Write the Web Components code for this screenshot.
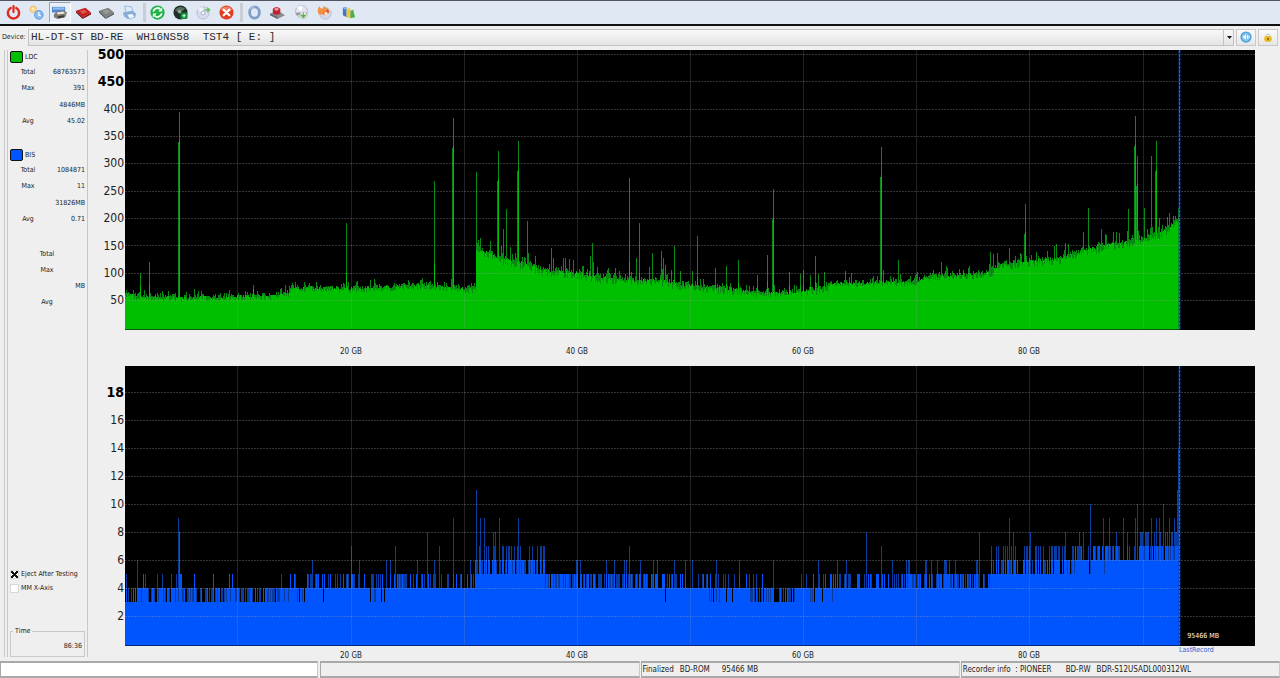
<!DOCTYPE html>
<html lang="en">
<head>
<meta charset="utf-8">
<title>Disc quality test</title>
<style>
  html, body { margin: 0; background: #efefef; }
  body { font: 8px/12px "DejaVu Sans Condensed", "DejaVu Sans", sans-serif; color: #222; }
</style>
</head>
<body>
<disc-app></disc-app>

<script>
const html = (s, ...v) => String.raw({ raw: s }, ...v);
const mount = (el, markup) => { el.attachShadow({ mode: "open" }).innerHTML = markup; };

/* ---------- icons ---------- */
const ICONS = {
  power: `<path d="M5 3.2A6 6 0 1 0 11 3.2" fill="none" stroke="#e02a20" stroke-width="2.6" stroke-linecap="round"/><path d="M8 1.2v6.3" stroke="#e02a20" stroke-width="2.4" stroke-linecap="round"/>`,
  links: `<circle cx="4.500" cy="4.500" r="3.400" fill="#f8d998" stroke="#eebd60"/><circle cx="10.500" cy="10.500" r="4.600" fill="#8dbdf0" stroke="#5b94da"/><path d="M10.500 7.500v3.300l2 1" stroke="#fff" fill="none" stroke-width="1.200"/><circle cx="4" cy="4" r="1.200" fill="#fff3c8"/>`,
  drive: `<path d="M0 2h14v6H0z" fill="#4d87cf"/><path d="M1 2.500h12v2.500H1z" fill="#8fbdf0"/><path d="M2 10l3-3 8-1 3 2-2 5-8 2-4-2z" fill="#7d7a72"/><path d="M5 8l7-1 2 2-8 1z" fill="#e9e6dc"/><path d="M6 12l7-1v2l-6 1z" fill="#3d3c3a"/>`,
  chipred: `<path d="M0 6l10-3 6 5-9 5z" fill="#c8201c"/><path d="M0 6l7 7v2L0 8z" fill="#6d0c0c"/><path d="M7 13l9-5v2l-9 5z" fill="#8c1512"/><path d="M4 6.500l5-1.500 3 2.500-5 2z" fill="#dd5a52"/>`,
  chip: `<path d="M0 6l10-3 6 5-9 5z" fill="#808382"/><path d="M0 6l7 7v2L0 8z" fill="#4c4e4e"/><path d="M7 13l9-5v2l-9 5z" fill="#606363"/><path d="M4 6.500l5-1.500 3 2.500-5 2z" fill="#9a9d9c"/>`,
  print: `<path d="M3 1l7 1 2 5-8 1z" fill="#dceafa" stroke="#7aa3d4" stroke-width=".7"/><path d="M1 8l10-2 4 3-1 4-8 2-4-3z" fill="#86acd8"/><path d="M5 10l6-1 3 4-6 2z" fill="#edf5fd" stroke="#6f99cb" stroke-width=".6"/>`,
  refresh: `<circle cx="8" cy="8" r="7.600" fill="#21b04b"/><path d="M3.500 7a4.600 4.600 0 0 1 7.500-2.600M12.500 9a4.600 4.600 0 0 1-7.500 2.600" fill="none" stroke="#e9ffe9" stroke-width="2"/><path d="M13 2.500V7H8.700zM3 13.500V9h4.300z" fill="#e9ffe9"/>`,
  scan: `<circle cx="8" cy="8" r="7.500" fill="#1f2f27"/><path d="M2 6a7 7 0 0 1 11-2L8 8z" fill="#57705f"/><circle cx="7" cy="7" r="2" fill="#8fa698"/><rect x="8" y="8" width="7.500" height="7" rx="2" fill="#118a3a"/><path d="M10 11.500h3.600M11.800 9.700v3.600" stroke="#d9ffdf" stroke-width="1.200"/>`,
  discadd: `<circle cx="7.500" cy="8.500" r="6.500" fill="#d8dcec" stroke="#b4bad2"/><path d="M7.500 8.500L2 5a6.500 6.500 0 0 1 5-3z" fill="#f4f6ff"/><circle cx="7.500" cy="8.500" r="2" fill="#fff" stroke="#a4abc6"/><path d="M9 4.500h3V1.800L15.500 5 12 8.500V6H9z" fill="#68c05b"/>`,
  stop: `<circle cx="8" cy="8" r="7.500" fill="#e23c22"/><ellipse cx="8" cy="4.500" rx="5.500" ry="3" fill="#f07e61"/><path d="M5 5l6 6M11 5l-6 6" stroke="#fff" stroke-width="2.400" stroke-linecap="round"/>`,
  ring: `<ellipse cx="8" cy="8" rx="5.200" ry="6" fill="#dfe9f5" stroke="#7e9fc8" stroke-width="3"/><path d="M3.500 4.500Q5 1.600 8 1.600" stroke="#b4cbe6" fill="none" stroke-width="1.200"/>`,
  siren: `<path d="M0 9l9-3 7 5-8 4z" fill="#8b8d92"/><path d="M0 9l8 4v2L0 11z" fill="#5d5f65"/><path d="M3 9V4q4-4 8 0v5q-4 3-8 0z" fill="#bd2433"/><ellipse cx="7" cy="4.500" rx="2.200" ry="1.500" fill="#ef9299"/>`,
  discget: `<circle cx="8" cy="7" r="6.500" fill="#e4e5f0" stroke="#b6b9cc"/><path d="M8 7L3 3a6.500 6.500 0 0 1 6-2z" fill="#fff"/><rect x="2" y="8" width="12" height="3" rx="1.500" fill="#9598ac"/><circle cx="10" cy="11" r="3.800" fill="#eef3ee" stroke="#a9b4a9" stroke-width=".6"/><path d="M10 8v5M7.800 11l2.200 2.500 2.200-2.500z" stroke="#5db14f" fill="#5db14f" stroke-width="1.200"/>`,
  burn: `<circle cx="9" cy="9" r="6" fill="#d5d9ea" stroke="#b3b8ce"/><path d="M2 10Q-1 5 3 1q0 3 3 3 1-1 1-3 6 3 6 7-3 3-11 2z" fill="#f39042"/><path d="M8 11Q5 8 9 7q2-1 2-3 3 3 1 5z" fill="#e5551f"/><circle cx="9.500" cy="9" r="1.800" fill="#fbe6d5"/>`,
  chart: `<path d="M2 3l4-1v11l-4-2z" fill="#3b76c9"/><path d="M6 5l4-2v11l-4-1z" fill="#f3c531"/><path d="M10 6l3-1 2 8-5 1z" fill="#4fae48"/><path d="M2 3l4-1 1 2-3 1z" fill="#8db8ec"/>`,
  audio: `<circle cx="8" cy="8" r="7.500" fill="#4f9fdc"/><circle cx="8" cy="8" r="5.600" fill="#86c3ef"/><path d="M3.500 8L8 4.500v7z" fill="#fff"/><path d="M10 5.500v5M12 6.500v3" stroke="#fff" stroke-width="1.200"/>`,
  lock: `<path d="M5 8V5q3-4 6 0v3" fill="none" stroke="#c6c2b4" stroke-width="1.600"/><rect x="2" y="6.500" width="12" height="9" rx="3.500" fill="#e9bd20"/><path d="M8 9v4" stroke="#6b5200" stroke-width="2"/>`
};

class ToolIcon extends HTMLElement {
  connectedCallback() {
    mount(this, html`<style>
      :host { display: block; width: var(--icon, 16px); height: var(--icon, 16px); }
      svg { display: block; width: 100%; height: 100%; }
    </style><svg viewBox="0 0 16 16" aria-hidden="true">${ICONS[this.getAttribute("name")]}</svg>`);
  }
}
customElements.define("tool-icon", ToolIcon);

/* ---------- toolbar ---------- */
class ToolBar extends HTMLElement {
  connectedCallback() {
    const btn = ([n, t, on]) => `<button title="${t}" aria-label="${t}"${on ? ' aria-pressed="true"' : ""}><tool-icon name="${n}"></tool-icon></button>`;
    const groups = [
      [["power", "Exit"], ["links", "Connections"], ["drive", "Drive", 1], ["chipred", "Write firmware"], ["chip", "Read firmware"], ["print", "Print"]],
      [["refresh", "Refresh"], ["scan", "Scan disc"], ["discadd", "Add disc"], ["stop", "Stop"]],
      [["ring", "Media"], ["siren", "Alert"], ["discget", "Save disc"], ["burn", "Burn"], ["chart", "Charts"]]
    ];
    mount(this, html`<style>
      :host { display: flex; align-items: center; height: 23px; padding: 0 2px;
        background: #e0e8f3; border-top: 1px solid #50555f; border-bottom: 2px solid #111; }
      div { display: flex; justify-content: space-between; }
      .g0 { width: 139px; } .g1 { width: 92px; } .g2 { width: 116px; }
      hr { width: 3px; height: 19px; margin: 0 0 0 2px; border: 0; background: #c9ced6; }
      button { width: 22px; height: 21px; padding: 0; border: 1px solid transparent; background: none;
        display: grid; place-items: center; --icon: 15px; }
      button[aria-pressed] { background: #e9eff8; border-color: #9aa3b0 #fff #fff #9aa3b0; }
    </style>${groups.map((g, i) => `<div class="g${i}">${g.map(btn).join("")}</div>`).join("<hr>")}`);
  }
}
customElements.define("tool-bar", ToolBar);

/* ---------- device selector ---------- */
class DeviceBar extends HTMLElement {
  connectedCallback() {
    const name = "HL-DT-ST BD-RE  WH16NS58  TST4 [ E: ]".replace(/ /g, "\u00a0");
    mount(this, html`<style>
      :host { display: flex; align-items: center; height: 22px; padding: 0 2px 2px; }
      label { width: 26px; font-size: 7px; white-space: nowrap; }
      .box { flex: 1; position: relative; display: flex; height: 17px; }
      select { appearance: none; flex: 1; min-width: 0; height: 17px; box-sizing: border-box; margin: 0; padding: 0 2px;
        border: 1px solid #c2c2c2; border-radius: 0; color: #2a2a2a;
        background: linear-gradient(#f8f8f8, #e4e4e4);
        font: 11px/15px "Liberation Mono", "Courier New", monospace; }
      .arrow { position: absolute; right: 0; top: 1px; bottom: 1px; width: 10px; border-left: 1px solid #c2c2c2;
        display: grid; place-items: center; pointer-events: none; }
      .arrow svg { width: 5px; height: 3px; }
      button { width: 20px; height: 17px; margin-left: 2px; padding: 0; border: 1px solid #c9c9c9;
        background: linear-gradient(#fafafa, #e6e6e6); display: grid; place-items: center; --icon: 12px; }
      button + button { --icon: 10px; }
    </style>
    <label for="dev">Device:</label>
    <span class="box"><select id="dev"><option>${name}</option></select>
      <span class="arrow"><svg viewBox="0 0 5 3"><path d="M0 0h5L2.500 3z" fill="#111"/></svg></span></span>
    <button aria-label="Sound"><tool-icon name="audio"></tool-icon></button>
    <button aria-label="Lock"><tool-icon name="lock"></tool-icon></button>`);
  }
}
customElements.define("device-bar", DeviceBar);

/* ---------- statistics ---------- */
class StatBlock extends HTMLElement {
  connectedCallback() {
    const a = n => this.getAttribute(n) || "";
    const title = a("name");
    mount(this, html`<style>
      :host { display: block; font-size: 7px; line-height: 16px; }
      h2 { display: flex; align-items: center; gap: 2px; height: 14px; margin: 0; font: inherit; }
      i { width: 11px; height: 10px; border: 1px solid #111; border-radius: 2px; background: ${a("color")}; }
      dl { display: grid; grid-template-columns: ${title ? "36px" : "74px"} minmax(0, 1fr); grid-auto-rows: ${title ? "16px 17px" : "16px"}; margin: 0; }
      dt { text-align: center; }
      dd { margin: 0; display: flex; justify-content: flex-end; white-space: nowrap; }
      dd.wide { grid-column: 1 / -1; }
    </style>
    ${title ? `<h2><i></i>${title}</h2>` : ""}
    <dl><dt>Total</dt><dd>${a("total")}</dd><dt>Max</dt><dd>${a("max")}</dd><dd class="wide">${a("at")}MB</dd><dt>Avg</dt><dd>${a("avg")}</dd></dl>`);
  }
}
customElements.define("stat-block", StatBlock);

class SideBar extends HTMLElement {
  connectedCallback() {
    mount(this, html`<style>
      :host { display: flex; flex-direction: column; box-sizing: border-box; width: 84px; margin-left: 4px;
        padding: 0 2px 0 2px; border: solid #c8c8c8; border-width: 0 1px; font-size: 7px; }
      .in { flex: 1; display: flex; flex-direction: column; border-left: 1px solid #c8c8c8; padding-left: 2px; }
      stat-block { margin-bottom: 18px; }
      .opts { margin-top: auto; }
      label { display: flex; align-items: center; gap: 2px; height: 14px; white-space: nowrap; }
      input { appearance: none; width: 9px; height: 9px; box-sizing: border-box; margin: 0; background: #fff; border: 1px solid #d8d8d8; }
      input:checked { background: linear-gradient(45deg, transparent 38%, #111 38% 62%, transparent 62%) 50%/7px 7px no-repeat,
        linear-gradient(-45deg, transparent 38%, #111 38% 62%, transparent 62%) 50%/7px 7px no-repeat, #fff; }
      fieldset { margin: 31px 0 0; padding: 5px 2px; border: 1px solid #c8c8c8; min-width: 0; line-height: 10px; text-align: right; }
      legend { padding: 0 2px; text-align: left; }
    </style>
    <div class="in">
      <stat-block name="LDC" color="#00be00" total="68763573" max="391" at="4846" avg="45.02"></stat-block>
      <stat-block name="BIS" color="#0055ff" total="1084871" max="11" at="31826" avg="0.71"></stat-block>
      <stat-block></stat-block>
      <div class="opts">
        <label><input type="checkbox" checked>Eject After Testing</label>
        <label><input type="checkbox">MM X-Axis</label>
      </div>
      <fieldset><legend>Time</legend>86:36</fieldset>
    </div>`);
  }
}
customElements.define("side-bar", SideBar);

/* ---------- charts ---------- */
const W = 1130, H = 280, END = 1054;   // drawing units; END is the last recorded column
const random = seed => () => {
  seed = (seed + 0x6D2B79F5) | 0;
  let t = Math.imul(seed ^ (seed >>> 15), 1 | seed);
  t = (t + Math.imul(t ^ (t >>> 7), 61 | t)) ^ t;
  return ((t ^ (t >>> 14)) >>> 0) / 4294967296;
};
const column = (x, top, w = 1) => `M${x} ${top}h${w}V${H}h-${w}z`;

function ldcPaths() {
  const base = [[0,247],[10,248],[60,250],[150,248],[164,245],[166,240],[220,241],[300,238],[350,242],[351,199],[360,204],[375,211],
    [395,215],[420,223],[455,226],[475,230],[535,233],[575,239],[600,241],[640,246],[675,244],[700,242],[705,236],[755,235],
    [790,234],[805,229],[860,227],[875,217],[905,214],[935,211],[955,204],[975,199],[1015,192],[1035,185],[1046,178],[1054,172]];
  const spikes = [[15,223],[24,212],[54,62,1],[128,235],[180,244],[221,173],[309,131],[328,68,1],[351,122],[373,101,1],[378,179],[381,159],
    [393,91,1],[402,171],[426,198],[428,208],[440,208],[465,206],[467,193],[504,128],[514,173],[511,208],[527,203],[536,201],
    [538,208],[540,215],[549,196],[572,186],[590,218],[601,216],[613,210],[632,225],[642,205],[648,139,1],[664,222],[675,224],[678,220],
    [685,225],[690,206],[693,224],[699,222],[720,221],[726,223],[756,97,1],[758,220],[773,210],[792,222],[816,212],[821,216],
    [844,216],[865,202],[868,204],[884,198],[895,203],[900,154,1],[929,196],[931,194],[940,193],[958,182],[963,158],[976,179],
    [994,183],[1003,159],[1010,66,1],[1012,106,1],[1019,158],[1026,106],[1031,91,1],[1034,168],[1042,167],[1053,158]];
  const rnd = random(11);
  let solid = "", dim = "", i = 0;
  for (let x = 0; x < END; x++) {
    while (base[i + 1][0] < x) i++;
    const [x0, y0] = base[i], [x1, y1] = base[i + 1];
    const y = y0 + (y1 - y0) * (x - x0) / (x1 - x0);
    const busy = x > 350 && x < 620 || x > 860 ? 2 : 0;
    solid += column(x, Math.round(y - 4 + rnd() * (6 + busy)));
    const r = rnd();
    dim += column(x, Math.round(y - 1 - rnd() * 5 - (r > .93 ? 5 + busy * 3 : r > .8 ? 3 + busy : 0)));
  }
  for (const [x, y, bright] of spikes) {
    dim += column(x, y);
    solid += column(x, bright ? y + 28 : y + Math.round((240 - y) * .75));
    if (bright) dim += column(x - 1, y + 30);
  }
  return { solid, dim };
}

function bisPaths() {
  // [until, solid level, chance one up, chance two up, chance one down]
  const runs = [[65,4,.16,0,.45],[155,4,.1,0,.6],[180,4,.3,0,.25],[350,4,.42,0,.05],[420,5,.75,.33,0],[440,5,.12,.02,.45],
    [540,4,.68,.16,0],[625,4,.3,.02,.07],[670,4,.12,0,.62],[700,4,.15,0,.15],[775,4,.42,.03,.03],[865,4,.66,.11,0],
    [950,5,.62,.3,0],[1010,6,.62,.1,.03],[1055,6,.85,.38,0]];
  const spikes = [[12,6],[53,9],[54,8,1],[187,6],[226,7],[234,6],[261,6],[265,6],[270,7],[292,6],[302,8],[309,6],[314,7],[328,9],[345,6],
    [351,11],[355,9],[359,9],[368,8],[370,8],[374,9],[393,9],[404,7],[416,7],[504,7],[549,6],[567,6],[591,6],[614,6],[648,6],
    [693,6],[721,6],[741,8],[756,7],[767,6],[854,8],[866,7],[884,9],[888,8],[905,8],[940,8],[954,8],[958,8],[965,10],[978,9],[984,9],
    [998,9],[1010,9],[1012,10],[1026,9],[1031,9],[1034,9],[1038,10],[1044,9],[1049,9],[1052,11],[1053,14]];
  const rnd = random(5), top = v => 278 - 14 * v;
  let solid = "", dim = "", i = 0;
  for (let x = 0; x < END; x++) {
    while (runs[i][0] <= x) i++;
    const [, level, up, up2, down] = runs[i];
    const r = rnd(), full = rnd() < .4;
    const low = rnd() < down ? 1 : 0;
    const rise = low ? 0 : r < up2 ? 2 : r < up ? 1 : 0;
    solid += column(x, top(level - low + (rise && full || rise === 2 ? 1 : 0)));
    if (rise) dim += column(x, top(level + rise));
    else if (low && rnd() < .55) dim += column(x, top(level));
  }
  for (const [x, v, bright] of spikes) bright ? solid += column(x, top(v)) : dim += column(x, top(v));
  return { solid, dim };
}

class PerfChart extends HTMLElement {
  connectedCallback() {
    const ldc = this.getAttribute("kind") === "ldc";
    const { solid, dim } = ldc ? ldcPaths() : bisPaths();
    const ticks = ldc ? [500,450,400,350,300,250,200,150,100,50] : [18,16,14,12,10,8,6,4,2];
    const bold = ldc ? 2 : 1;
    const rows = ticks.map((_, i) => ldc ? Math.round(4 + i * 27.33) : 26 + i * 28);
    const color = ldc ? "#00be00" : "#0055ff", shade = ldc ? "#088a12" : "#0a3ba0";
    const dashes = Array.from({ length: 70 }, (_, i) => `M1054 ${i * 4}h1v3h-1z`).join("");
    mount(this, html`<style>
      :host { display: grid; grid-template: 1fr var(--axis) / 36px 1fr 25px; }
      ol { list-style: none; margin: ${ldc ? "-10px 0 16px" : "12px 0 16px"}; padding: 0 1px 0 0; display: flex; flex-direction: column; text-align: right; }
      .y li { flex: 1; display: flex; align-items: center; justify-content: flex-end; font-size: 12px; line-height: 14px; }
      .y li:nth-child(-n+${bold}) { font-size: 14px; font-weight: bold; color: #000; }
      .plot { position: relative; min-height: 240px; background: #000; }
      svg { position: absolute; inset: 0; width: 100%; height: 100%; }
      .x { grid-column: 2; margin: 0; padding: var(--drop) 10% 0; flex-direction: row; line-height: 10px; }
      .x li { flex: 1; text-align: center; }
      .size { position: absolute; left: 94%; bottom: 5px; color: #fff; font-size: 7px; line-height: 10px; white-space: nowrap; }
      .last { position: absolute; left: calc(100% * 1054 / 1130); top: 100%; color: #2b5fd9; font-size: 7px; line-height: 9px; }
    </style>
    <ol class="y">${ticks.map(t => `<li>${t}</li>`).join("")}</ol>
    <div class="plot">
      <svg viewBox="0 0 ${W} ${H}" preserveAspectRatio="none" shape-rendering="crispEdges" role="img" aria-label="${ldc ? "LDC" : "BIS"} errors by position">
        <path d="${dim}" fill="${shade}"/><path d="${solid}" fill="${color}"/>
        <path d="${[112,226,339,452,565,678,791,904,1018].map(x => `M${x} 0h1v${H}h-1z`).join("")}" fill="#999" opacity=".22"/>
        <path d="${rows.map(y => `M0 ${y}.500H${W}`).join("")}" stroke="#aaa" stroke-dasharray="2 1" opacity=".3"/>
        <path d="M0 279.500H${END}" stroke="${ldc ? "#085c0a" : "#06277a"}"/>
        <path d="M1053 0h3v${H}h-3z" fill="#0a3ba0" opacity=".35"/>
        <path d="${dashes}" fill="#1f6bff"/>
      </svg>
      ${ldc ? "" : `<span class="size">95466 MB</span><span class="last">LastRecord</span>`}
    </div>
    <ol class="x">${[20,40,60,80].map(g => `<li>${g} GB</li>`).join("")}</ol>`);
  }
}
customElements.define("perf-chart", PerfChart);

/* ---------- status bar ---------- */
class StatusBar extends HTMLElement {
  connectedCallback() {
    mount(this, html`<style>
      :host { display: grid; grid-template-columns: repeat(4, 1fr); gap: 1px; height: 17px; background: #efefef; }
      ::slotted(div) { display: flex; align-items: center; gap: 6px; box-sizing: border-box; padding: 0 1px;
        border: solid #a9a9a9; border-right-color: #c9c9c9; border-width: 2px 1px; white-space: pre; min-width: 0; }
      ::slotted(div:first-child) { background: #fff; margin-right: 1px; }
    </style><slot></slot>`);
  }
}
customElements.define("status-bar", StatusBar);

/* ---------- application ---------- */
class DiscApp extends HTMLElement {
  connectedCallback() {
    mount(this, html`<style>
      :host { display: flex; flex-direction: column; min-height: 100vh; }
      main { flex: 1; display: flex; margin: 0 0 4px; }
      section { flex: 1; min-width: 0; display: flex; flex-direction: column; padding-left: 1px; }
      perf-chart { flex: 1 1 auto; --axis: 36px; --drop: 17px; }
      perf-chart[kind="bis"] { --axis: 11px; --drop: 5px; }
      .wide { margin-left: 6px; }
      .id { margin-left: 8px; }
    </style>
    <tool-bar></tool-bar>
    <device-bar></device-bar>
    <main>
      <side-bar></side-bar>
      <section><perf-chart kind="ldc"></perf-chart><perf-chart kind="bis"></perf-chart></section>
    </main>
    <status-bar>
      <div></div><div></div>
      <div><span>Finalized</span><span>BD-ROM</span><span class="wide">95466 MB</span></div>
      <div><span>Recorder info  : PIONEER</span><span class="id">BD-RW</span><span>BDR-S12USADL000312WL</span></div>
    </status-bar>`);
  }
}
customElements.define("disc-app", DiscApp);
</script>
</body>
</html>
